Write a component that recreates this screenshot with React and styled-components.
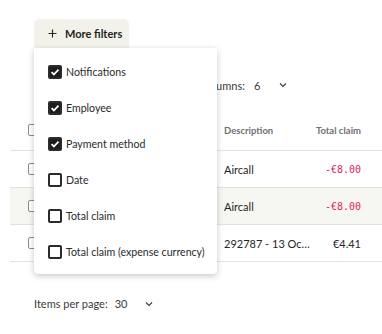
import React from 'react';
import styled, {createGlobalStyle} from 'styled-components';

const GlobalStyle = createGlobalStyle`
  body {
    margin: 0;
    background: #fff;
    font-family: Lato, "Noto Sans", sans-serif;
    color: #232323;
  }
`;

const Page = styled.div`
  width: 382px;
  height: 334px;
  padding-top: 19px;
  box-sizing: border-box;
  overflow: hidden;
`;

const Toolbar = styled.div`
  padding-left: 34px;
  display: flex;
`;

const FilterWrap = styled.div`
  position: relative;
`;

const FilterButton = styled.button`
  height: 29px;
  width: 95px;
  border: none;
  border-radius: 5px 5px 0 0;
  background: #f3f2ea;
  display: flex;
  align-items: center;
  gap: 8px;
  padding: 0 0 0 14px;
  font-family: inherit;
  font-size: 11px;
  font-weight: 700;
  color: #1f1f1f;
`;

const Menu = styled.ul`
  position: absolute;
  top: 100%;
  left: 0;
  width: 183px;
  margin: 0;
  padding: 6px 0 4px;
  list-style: none;
  background: #fff;
  border-radius: 0 0 4px 4px;
  box-shadow: 0 2px 6px rgba(0, 0, 0, 0.22);
  z-index: 10;
`;

const MenuItem = styled.li`
  height: 36px;
  display: flex;
  align-items: center;
  gap: 4px;
  padding-left: 14px;
  font-size: 10.6px;
  color: #2a2a2a;
  white-space: nowrap;
`;

const Box = styled.span`
  width: 14px;
  height: 14px;
  box-sizing: border-box;
  border-radius: 2px;
  border: 2px solid #2b2b2b;
  background: ${p => (p.$checked ? '#1c1c1c' : '#fff')};
  display: flex;
  align-items: center;
  justify-content: center;
`;

const ColumnsRow = styled.div`
  margin-top: 27px;
  height: 20px;
  padding-left: 200px;
  display: flex;
  align-items: center;
  font-size: 11px;
  color: #3a3a3a;
`;

const ColumnsValue = styled.span`
  margin-left: 9px;
  margin-right: 19px;
`;

const Table = styled.div`
  margin-top: 15px;
  margin-left: 10px;
`;

const Row = styled.div`
  display: grid;
  grid-template-columns: 1fr 86px 51px;
  align-items: center;
  height: ${p => (p.$header ? '40px' : '36px')};
  padding-right: 21px;
  border-bottom: 1px solid #e2e2e0;
  background: ${p => (p.$hover ? '#f7f7f2' : 'transparent')};
  font-size: ${p => (p.$header ? '9.5px' : '11px')};
  font-weight: ${p => (p.$header ? 700 : 400)};
  color: ${p => (p.$header ? '#707070' : '#262626')};
`;

const CheckCell = styled.div`
  padding-left: 18px;
`;

const SmallBox = styled.span`
  display: block;
  width: 12px;
  height: 12px;
  box-sizing: border-box;
  border: 1.5px solid #8a8a8a;
  border-radius: 2px;
  background: #fff;
`;

const Desc = styled.div`
  overflow: hidden;
  text-overflow: ellipsis;
  white-space: nowrap;
`;

const Amount = styled.div`
  text-align: right;
  white-space: nowrap;
  font-family: ${p => (p.$mono ? '"DejaVu Sans Mono", monospace' : 'inherit')};
  font-size: ${p => (p.$mono ? '10px' : 'inherit')};
  color: ${p => (p.$negative ? '#e0245e' : 'inherit')};
`;

const Footer = styled.div`
  margin-top: 35px;
  padding-left: 34px;
  display: flex;
  align-items: center;
  font-size: 11px;
  color: #3a3a3a;
`;

const FooterValue = styled.span`
  margin-left: 7px;
  margin-right: 18px;
`;

const Plus = () => (
  <svg width="9" height="9" viewBox="0 0 9 9">
    <path d="M4.5 0.5v8M0.5 4.5h8" stroke="#2a2a2a" strokeWidth="1.2" />
  </svg>
);

const Check = () => (
  <svg width="10" height="10" viewBox="0 0 10 10">
    <path d="M1.6 5.2l2.3 2.3 4.6-4.9" fill="none" stroke="#fff" strokeWidth="1.8" />
  </svg>
);

const Chevron = () => (
  <svg width="8" height="6" viewBox="0 0 8 6">
    <path d="M1 1.5l3 3 3-3" fill="none" stroke="#3a3a3a" strokeWidth="1.1" />
  </svg>
);

const options = [
  {label: 'Notifications', checked: true},
  {label: 'Employee', checked: true},
  {label: 'Payment method', checked: true},
  {label: 'Date', checked: false},
  {label: 'Total claim', checked: false},
  {label: 'Total claim (expense currency)', checked: false},
];

const rows = [
  {desc: 'Aircall', amount: '-€8.00', negative: true},
  {desc: 'Aircall', amount: '-€8.00', negative: true, hover: true},
  {desc: '292787 - 13 October 2023', amount: '€4.41'},
];

const App = () => {
  return (
    <Page>
      <GlobalStyle />
      <Toolbar>
        <FilterWrap>
          <FilterButton>
            <Plus />
            More filters
          </FilterButton>
          <Menu>
            {options.map(o => (
              <MenuItem key={o.label}>
                <Box $checked={o.checked}>{o.checked && <Check />}</Box>
                {o.label}
              </MenuItem>
            ))}
          </Menu>
        </FilterWrap>
      </Toolbar>

      <ColumnsRow>
        Columns:
        <ColumnsValue>6</ColumnsValue>
        <Chevron />
      </ColumnsRow>

      <Table>
        <Row $header>
          <CheckCell>
            <SmallBox />
          </CheckCell>
          <Desc>Description</Desc>
          <Amount>Total claim</Amount>
        </Row>
        {rows.map((r, i) => (
          <Row key={i} $hover={r.hover}>
            <CheckCell>
              <SmallBox />
            </CheckCell>
            <Desc>{r.desc}</Desc>
            <Amount $mono={r.negative} $negative={r.negative}>
              {r.amount}
            </Amount>
          </Row>
        ))}
      </Table>

      <Footer>
        Items per page:
        <FooterValue>30</FooterValue>
        <Chevron />
      </Footer>
    </Page>
  );
};

export default App;
